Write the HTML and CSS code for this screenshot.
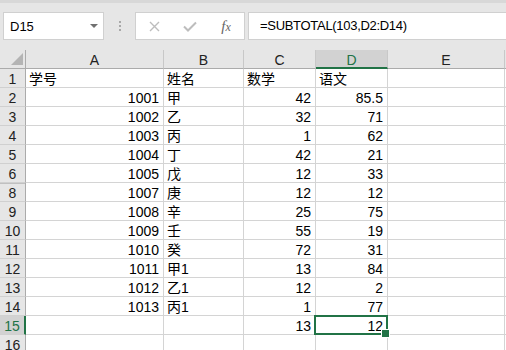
FILE: index.html
```html
<!doctype html>
<html lang="zh-CN">
<head>
    <meta charset="UTF-8">
    <title>SUBTOTAL</title>
    <link rel="stylesheet" href="styles.css">
</head>
<body>
    <div class="toolbar">
        <div class="namebox"><span class="ref">D15</span><span class="caret"></span></div>
        <div class="grip"><i></i><i></i><i></i></div>
        <div class="fx-buttons">
            <span class="slot">
                <svg width="11" height="11" viewBox="0 0 11 11"><path d="M1 1L10 10M10 1L1 10" stroke="#bdbdbd" stroke-width="1.4" fill="none"/></svg>
            </span>
            <span class="slot">
                <svg width="14" height="11" viewBox="0 0 14 11"><path d="M1 5.5L5 9.5L13 1.5" stroke="#bdbdbd" stroke-width="2" fill="none"/></svg>
            </span>
            <span class="slot fx">f<span>x</span></span>
        </div>
        <div class="formula">=SUBTOTAL(103,D2:D14)</div>
    </div>

    <div class="sheet">
        <div class="row head">
            <div class="corner"></div>
            <div class="colhead">A</div>
            <div class="colhead">B</div>
            <div class="colhead">C</div>
            <div class="colhead active">D</div>
            <div class="colhead">E</div>
            <div class="colhead rest"></div>
        </div>
        <div class="row">
            <div class="rowhead">1</div>
            <div class="cell">学号</div><div class="cell">姓名</div><div class="cell">数学</div><div class="cell">语文</div><div class="cell"></div><div class="cell rest"></div>
        </div>
        <div class="row">
            <div class="rowhead">2</div>
            <div class="cell num">1001</div><div class="cell">甲</div><div class="cell num">42</div><div class="cell num">85.5</div><div class="cell"></div><div class="cell rest"></div>
        </div>
        <div class="row">
            <div class="rowhead">3</div>
            <div class="cell num">1002</div><div class="cell">乙</div><div class="cell num">32</div><div class="cell num">71</div><div class="cell"></div><div class="cell rest"></div>
        </div>
        <div class="row">
            <div class="rowhead">4</div>
            <div class="cell num">1003</div><div class="cell">丙</div><div class="cell num">1</div><div class="cell num">62</div><div class="cell"></div><div class="cell rest"></div>
        </div>
        <div class="row">
            <div class="rowhead">5</div>
            <div class="cell num">1004</div><div class="cell">丁</div><div class="cell num">42</div><div class="cell num">21</div><div class="cell"></div><div class="cell rest"></div>
        </div>
        <div class="row">
            <div class="rowhead">6</div>
            <div class="cell num">1005</div><div class="cell">戊</div><div class="cell num">12</div><div class="cell num">33</div><div class="cell"></div><div class="cell rest"></div>
        </div>
        <!-- 第7行已隐藏 -->
        <div class="row">
            <div class="rowhead after-hidden">8</div>
            <div class="cell num">1007</div><div class="cell">庚</div><div class="cell num">12</div><div class="cell num">12</div><div class="cell"></div><div class="cell rest"></div>
        </div>
        <div class="row">
            <div class="rowhead">9</div>
            <div class="cell num">1008</div><div class="cell">辛</div><div class="cell num">25</div><div class="cell num">75</div><div class="cell"></div><div class="cell rest"></div>
        </div>
        <div class="row">
            <div class="rowhead">10</div>
            <div class="cell num">1009</div><div class="cell">壬</div><div class="cell num">55</div><div class="cell num">19</div><div class="cell"></div><div class="cell rest"></div>
        </div>
        <div class="row">
            <div class="rowhead">11</div>
            <div class="cell num">1010</div><div class="cell">癸</div><div class="cell num">72</div><div class="cell num">31</div><div class="cell"></div><div class="cell rest"></div>
        </div>
        <div class="row">
            <div class="rowhead">12</div>
            <div class="cell num">1011</div><div class="cell">甲1</div><div class="cell num">13</div><div class="cell num">84</div><div class="cell"></div><div class="cell rest"></div>
        </div>
        <div class="row">
            <div class="rowhead">13</div>
            <div class="cell num">1012</div><div class="cell">乙1</div><div class="cell num">12</div><div class="cell num">2</div><div class="cell"></div><div class="cell rest"></div>
        </div>
        <div class="row">
            <div class="rowhead">14</div>
            <div class="cell num">1013</div><div class="cell">丙1</div><div class="cell num">1</div><div class="cell num">77</div><div class="cell"></div><div class="cell rest"></div>
        </div>
        <div class="row">
            <div class="rowhead active">15</div>
            <div class="cell"></div><div class="cell"></div><div class="cell num">13</div><div class="cell num selected">12</div><div class="cell"></div><div class="cell rest"></div>
        </div>
        <div class="row">
            <div class="rowhead">16</div>
            <div class="cell"></div><div class="cell"></div><div class="cell"></div><div class="cell"></div><div class="cell"></div><div class="cell rest"></div>
        </div>
    </div>
</body>
</html>
```

FILE: styles.css
```css
/*样式重置*/
*{
    margin:0;
    padding:0;
    box-sizing: border-box;
}
body{
    overflow: hidden;
    font-family: "Liberation Sans", "Noto Sans CJK SC", sans-serif;
    font-size: 14px;
    color: #000000;
    background: #ffffff;
}

/*编辑栏*/
.toolbar{
    display: flex;
    align-items: flex-start;
    height: 50px;
    padding: 9px 0 0 3px;
    background: #e6e6e6;
    border-top: 3px solid #d8d8d8;
}
.namebox{
    display: flex;
    align-items: center;
    width: 101px;
    height: 28px;
    padding-left: 6px;
    background: #ffffff;
    border: 1px solid #d0d0d0;
    font-size: 13px;
}
.namebox .caret{
    margin-left: auto;
    margin-right: 5px;
    border-left: 4px solid transparent;
    border-right: 4px solid transparent;
    border-top: 4px solid #707070;
}
.grip{
    display: flex;
    flex-direction: column;
    align-items: center;
    gap: 2px;
    width: 31px;
    padding-top: 9px;
}
.grip i{
    width: 2px;
    height: 2px;
    background: #a8a8a8;
}
.fx-buttons{
    display: flex;
    width: 110px;
    height: 28px;
    background: #ffffff;
    border: 1px solid #d0d0d0;
}
.fx-buttons .slot{
    display: flex;
    align-items: center;
    justify-content: center;
    width: 36px;
}
.fx-buttons .fx{
    font-family: "Liberation Serif", serif;
    font-style: italic;
    font-size: 15px;
    color: #666666;
}
.fx-buttons .fx span{
    font-size: 12px;
    margin-top: 3px;
}
.formula{
    flex: 1;
    height: 28px;
    margin-left: 3px;
    padding-left: 11px;
    line-height: 26px;
    background: #ffffff;
    border: 1px solid #d0d0d0;
    border-right: none;
    font-size: 13px;
    letter-spacing: -0.3px;
}

/*表格*/
.row{
    display: grid;
    grid-template-columns: 26px 138px 80px 72px 72px 117px 1fr;
    height: 19px;
}
.corner, .colhead, .rowhead, .cell{
    height: 19px;
    padding-top: 3px;
    line-height: 15px;
    white-space: nowrap;
}
.corner{
    position: relative;
    background: #e6e6e6;
    border-right: 1px solid #ababab;
    border-bottom: 1px solid #ababab;
}
.corner::after{
    content: "";
    position: absolute;
    right: 2px;
    bottom: 3px;
    border-left: 12px solid transparent;
    border-bottom: 12px solid #b4b4b4;
}
.colhead{
    text-align: center;
    color: #222222;
    background: #e6e6e6;
    border-right: 1px solid #c8c8c8;
    border-bottom: 1px solid #ababab;
}
.colhead.active{
    background: #d2d2d2;
    color: #217346;
    border-bottom: 2px solid #217346;
}
.colhead.rest{
    border-right: none;
}
.rowhead{
    text-align: center;
    color: #222222;
    background: #e6e6e6;
    border-right: 1px solid #ababab;
    border-bottom: 1px solid #d0d0d0;
}
.rowhead.after-hidden{
    box-shadow: inset 0 1px 0 #c0c0c0;
}
.rowhead.active{
    background: #d2d2d2;
    color: #217346;
    border-right: 2px solid #217346;
}
.cell{
    padding-left: 3px;
    padding-right: 4px;
    border-right: 1px solid #d4d4d4;
    border-bottom: 1px solid #d4d4d4;
}
.cell.num{
    text-align: right;
}
.cell.rest{
    border-right: none;
}
.cell.selected{
    position: relative;
}
.cell.selected::before{
    content: "";
    position: absolute;
    left: -2px;
    top: -1px;
    right: -1px;
    bottom: -1px;
    border: 2px solid #217346;
}
.cell.selected::after{
    content: "";
    position: absolute;
    right: -3px;
    bottom: -4px;
    width: 7px;
    height: 7px;
    background: #217346;
    border: 1px solid #ffffff;
}
```
